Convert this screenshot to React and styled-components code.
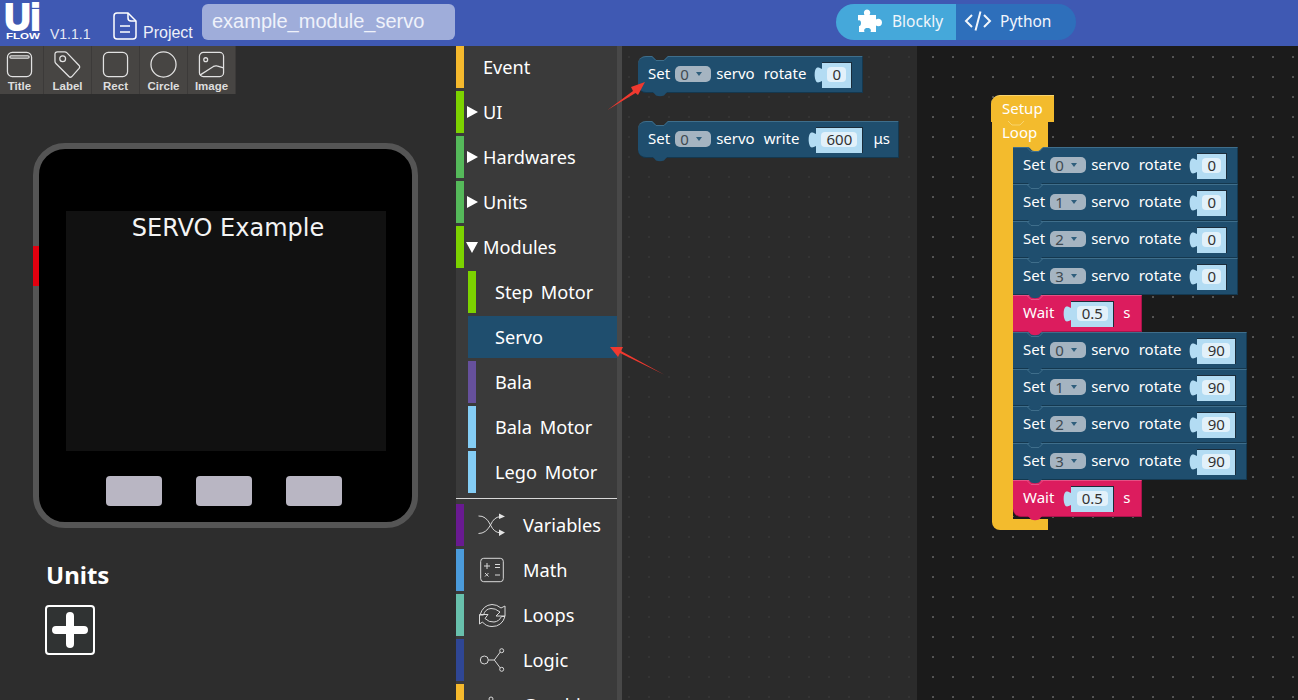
import React from 'react'
import styled, { createGlobalStyle } from 'styled-components'

const GlobalStyle = createGlobalStyle`
  html, body { margin: 0; padding: 0; background: #2d2d2d; }
  * { box-sizing: border-box; }
`

const Page = styled.div`
  position: relative;
  width: 1298px;
  height: 700px;
  overflow: hidden;
  display: flex;
  flex-direction: column;
  font-family: "Noto Sans", sans-serif;
`

/* header */
const Header = styled.header`
  height: 46px;
  flex: none;
  background: #3f59b3;
  display: flex;
  align-items: flex-start;
  color: #fff;
  font-family: "Liberation Sans", sans-serif;
`
const Logo = styled.svg`
  width: 50px;
  height: 46px;
  flex: none;
  font-family: "Liberation Sans", sans-serif;
  font-weight: 700;
`
const Version = styled.span`
  width: 62px;
  margin-top: 27px;
  font-size: 14px;
  line-height: 15px;
  color: #e6e9f5;
`
const ProjectIcon = styled.svg`
  width: 26px;
  height: 30px;
  margin-top: 11px;
  flex: none;
`
const ProjectLabel = styled.span`
  margin: 24px 0 0 5px;
  width: 59px;
  font-size: 16px;
  line-height: 18px;
  color: #eef0f8;
`
const NameField = styled.div`
  width: 253px;
  height: 36px;
  margin-top: 4px;
  padding-left: 10px;
  border-radius: 6px;
  background: #9fadda;
  font-size: 20px;
  line-height: 34px;
  color: #eff2fa;
`
const ModeSwitch = styled.div`
  display: flex;
  margin: 4px 0 0 381px;
  height: 36px;
  width: 240px;
  border-radius: 18px;
  overflow: hidden;
  font-family: "Noto Sans", sans-serif;
  font-size: 15.5px;
`
const ModeTab = styled.div`
  width: 120px;
  display: flex;
  align-items: center;
  gap: ${p => p.$gap}px;
  padding-left: ${p => p.$pad}px;
  padding-bottom: 2px;
  background: ${p => (p.$active ? '#45a8da' : '#2e6fbb')};
  color: #f2f6fb;
`

/* left panel */
const Main = styled.div`
  flex: 1;
  display: flex;
  min-height: 0;
`
const LeftPanel = styled.section`
  width: 456px;
  flex: none;
  background: #2d2d2d;
  overflow: hidden;
`
const Toolbar = styled.div`
  display: flex;
  margin-left: -4px;
`
const ToolItem = styled.div`
  width: 48px;
  height: 48px;
  display: flex;
  flex-direction: column;
  align-items: center;
  padding-top: 5px;
  background: #474543;
  border-right: 1px solid #3c3a39;
  color: #dedede;
  font-family: "Liberation Sans", sans-serif;
  font-weight: 700;
  font-size: 11.5px;
  line-height: 16px;
`
const ToolIcon = styled.svg`
  width: 27px;
  height: 27px;
  flex: none;
`
const Device = styled.div`
  position: relative;
  width: 385px;
  height: 385px;
  margin: 49px 0 0 33px;
  border: 6px solid #555;
  border-radius: 32px;
  background: #000;
  padding: 62px 0 0 27px;
`
const SideTab = styled.div`
  position: absolute;
  left: -6px;
  top: 97px;
  width: 6px;
  height: 40px;
  background: #e3000f;
`
const Screen = styled.div`
  width: 320px;
  height: 240px;
  background: #111;
  color: #f4f4f4;
  font-family: "DejaVu Sans", sans-serif;
  font-size: 24px;
  line-height: 34px;
  text-align: center;
  padding-left: 4px;
`
const DeviceButtons = styled.div`
  display: flex;
  gap: 34px;
  margin: 25px 0 0 40px;
`
const DeviceButton = styled.div`
  width: 56px;
  height: 30px;
  border-radius: 4px;
  background: #b9b6c3;
`
const UnitsTitle = styled.h2`
  margin: 30px 0 0 46px;
  font-size: 24px;
  line-height: 34px;
  font-weight: 700;
  color: #fff;
`
const AddButton = styled.div`
  width: 50px;
  height: 50px;
  margin: 13px 0 0 45px;
  border: 2px solid #fff;
  border-radius: 4px;
  background: #303333;
  display: flex;
  align-items: center;
  justify-content: center;
`
const PlusIcon = styled.svg`
  width: 36px;
  height: 36px;
  filter: blur(0.6px);
`

/* category list */
const Sidebar = styled.nav`
  width: 166px;
  flex: none;
  background: #3a3a3a;
  border-right: 5px solid #484848;
  overflow: hidden;
  color: #fff;
  font-size: 18.2px;
  word-spacing: 3px;
`
const Row = styled.div`
  display: flex;
  align-items: center;
  height: 42px;
  margin: 0 0 3px ${p => (p.$sub ? 12 : 0)}px;
  background: ${p => (p.$selected ? '#1f4e6e' : 'transparent')};
  white-space: nowrap;
`
const ColorBar = styled.div`
  width: 8px;
  height: 100%;
  flex: none;
  background: ${p => p.$color};
`
const Label = styled.span`
  margin-left: ${p => p.$left}px;
  line-height: 42px;
`
const Caret = styled.span`
  width: 0;
  height: 0;
  margin-left: 3px;
  margin-right: -14px;
  border-style: solid;
  border-color: transparent;
  ${p =>
    p.$open
      ? 'border-width: 11px 6px 0 6px; border-top-color: #fff; margin-left: 2px;'
      : 'border-width: 6px 0 6px 11px; border-left-color: #fff;'}
`
const Divider = styled.div`
  height: 1px;
  margin: 5px 0;
  background: #d8d8d8;
`
const CatIcon = styled.svg`
  width: 30px;
  height: 30px;
  margin-left: 13px;
  flex: none;
`

/* block canvases */
const Flyout = styled.section`
  position: relative;
  width: 295px;
  flex: none;
  background-color: #2b2b2b;
  background-image: radial-gradient(circle at 1px 1px, #353535 0.7px, transparent 0.8px);
  background-size: 20px 20px;
  background-position: 6px 10px;
`
const Workspace = styled.section`
  position: relative;
  flex: 1;
  background-color: #1b1b1b;
  background-image: radial-gradient(circle at 1px 1px, #585858 0.7px, transparent 0.8px);
  background-size: 20px 20px;
  background-position: 15px 10px;
`
const FlyoutCorner = styled.div`
  position: absolute;
  right: -8px;
  top: 0;
  width: 8px;
  height: 100%;
  background: #2b2b2b;
  border-radius: 0 8px 8px 0;
`
const Placed = styled.div`
  position: absolute;
  left: ${p => p.$x}px;
  top: ${p => p.$y}px;
`
const BlockBody = styled.div`
  position: relative;
  display: flex;
  align-items: center;
  width: ${p => p.$width}px;
  height: 37px;
  padding: 0 0 3px 10px;
  background: ${p => p.$color};
  border-top: 1px solid ${p => p.$light};
  border-bottom: 1px solid ${p => p.$dark};
  border-right: 1px solid ${p => p.$dark};
  border-radius: ${p => (p.$round ? '8px 0 0 8px' : p.$last ? '0 0 0 8px' : '0')};
  color: #fff;
  font-size: 15px;
  white-space: nowrap;
`
const Word = styled.span`
  margin-left: ${p => p.$left || 0}px;
  line-height: 20px;
`
const Dropdown = styled.span`
  display: flex;
  align-items: center;
  width: 36px;
  height: 16px;
  margin: 2px 0 0 5px;
  padding-left: 5px;
  border-radius: 5px;
  background: #a5b4c1;
  color: #3f4a52;
`
const DropArrow = styled.span`
  width: 0;
  height: 0;
  margin-left: 7px;
  border-style: solid;
  border-width: 4px 3px 0 3px;
  border-color: #2f5e7c transparent transparent;
`
const Slot = styled.span`
  display: flex;
  align-items: center;
  margin: 4px 0 0 ${p => p.$left}px;
`
const Plug = styled.svg`
  width: 8px;
  height: 16px;
  flex: none;
`
const SlotBody = styled.span`
  display: flex;
  align-items: center;
  justify-content: center;
  width: ${p => p.$width}px;
  height: 26px;
  padding-bottom: 3px;
  background: #b3dcf3;
  border-top: 1px solid #1b2c3a;
  border-right: 1px solid #1b2c3a;
`
const Field = styled.span`
  width: ${p => p.$width}px;
  height: 15px;
  border-radius: 4px;
  background: #e2f1fa;
  color: #333;
  line-height: 15px;
  text-align: center;
`
const Notch = styled.svg`
  position: absolute;
  left: ${p => p.$left || 11}px;
  width: 22px;
  height: 6px;
  z-index: 2;
`
const TopNotch = styled(Notch)`
  top: -1px;
`
const BottomBump = styled(Notch)`
  bottom: -5px;
`

const Hat = styled.div`
  position: relative;
  width: 63px;
  height: 27px;
  padding: 2px 0 0 11px;
  background: #f3bb2d;
  border-top: 1px solid #f8d36d;
  border-radius: 9px 0 0 0;
  color: #fff;
  font-size: 15px;
  line-height: 20px;
`
const LoopHead = styled.div`
  position: relative;
  width: 56px;
  height: 25px;
  margin-left: 1px;
  padding-left: 10px;
  background: #f3bb2d;
  color: #fff;
  font-size: 15px;
  line-height: 20px;
`
const LoopMiddle = styled.div`
  display: flex;
  margin-left: 1px;
`
const Spine = styled.div`
  width: 21px;
  background: #f3bb2d;
`
const Stack = styled.div`
  display: flex;
  flex-direction: column;
`
const LoopFoot = styled.div`
  position: relative;
  width: 56px;
  height: 13px;
  margin-left: 1px;
  background: #f3bb2d;
  border-radius: 0 0 0 8px;
  &::before {
    content: "";
    position: absolute;
    left: 21px;
    top: 0;
    width: 35px;
    height: 2px;
    background: #1b1b1b;
  }
`
const Overlay = styled.svg`
  position: absolute;
  left: 0;
  top: 0;
  pointer-events: none;
  z-index: 5;
`

const BLUE = { $color: '#1f4e6e', $light: '#3f6e8b', $dark: '#14384f' }
const PINK = { $color: '#dc1c5e', $light: '#e64f84', $dark: '#a8134a' }

const ValueSlot = ({ value, left, body, field }) => (
  <Slot $left={left}>
    <Plug viewBox="0 0 8 16">
      <path d="M8 2C6 1 4 0 2.500 1 0 3 0 12 2.500 15 4 16 6 15 8 14z" fill="#b3dcf3" />
    </Plug>
    <SlotBody $width={body}>
      <Field $width={field}>{value}</Field>
    </SlotBody>
  </Slot>
)

// free standing blocks have a real dip in the top edge, stacked ones only show a line
const Connectors = ({ fill, line, dip }) => (
  <>
    <TopNotch viewBox="0 0 22 6">
      {dip && <path d="M3 0h16l-4 4H7z" fill={dip} />}
      <path d="M0 .500h3l4 4h8l4-4h3" fill="none" stroke={line} strokeWidth="1" />
    </TopNotch>
    <BottomBump viewBox="0 0 22 6">
      <path d="M3 0h16l-4 4.500q-4 1.500-8 0z" fill={fill} />
    </BottomBump>
  </>
)

const ServoBlock = ({ pin, action, value, width, slotLeft, body, field, unit, round }) => (
  <BlockBody {...BLUE} $width={width} $round={round}>
    <Word>Set</Word>
    <Dropdown>
      {pin}
      <DropArrow />
    </Dropdown>
    <Word $left={5}>servo</Word>
    <Word $left={9}>{action}</Word>
    <ValueSlot value={value} left={slotLeft} body={body} field={field} />
    {unit && <Word $left={10}>{unit}</Word>}
    <Connectors fill="#1f4e6e" line="#3f6e8b" dip={round ? '#2b2b2b' : null} />
  </BlockBody>
)

const WaitBlock = ({ last }) => (
  <BlockBody {...PINK} $width={129} $last={last}>
    <Word>Wait</Word>
    <ValueSlot value="0.5" left={9} body={43} field={31} />
    <Word $left={9}>s</Word>
    <Connectors fill="#dc1c5e" line="#e64f84" />
  </BlockBody>
)

const stroke = { fill: 'none', stroke: '#e2e2e2', strokeWidth: 1.3 }
const catStroke = { fill: 'none', stroke: '#d9d9d9', strokeWidth: 1 }

const tools = [
  {
    name: 'Title',
    icon: (
      <>
        <rect x="1.500" y="1.500" width="25" height="25" rx="5" {...stroke} />
        <rect x="4" y="5" width="20" height="2.500" rx="1.200" {...stroke} />
      </>
    ),
  },
  {
    name: 'Label',
    icon: (
      <>
        <path d="M1 3.500Q1 1 3.500 1H11q1.500 0 2.500 1L26 15q1.200 1.500 0 3l-7.500 8.500q-1.500 1.500-3 0L2 13q-1-1-1-2.500z" {...stroke} />
        <circle cx="9" cy="8" r="3" {...stroke} />
      </>
    ),
  },
  { name: 'Rect', icon: <rect x="1.500" y="1.500" width="25" height="25" rx="5" {...stroke} /> },
  { name: 'Circle', icon: <circle cx="14" cy="14" r="13" {...stroke} /> },
  {
    name: 'Image',
    icon: (
      <>
        <rect x="1.500" y="1.500" width="25" height="25" rx="4" {...stroke} />
        <circle cx="8" cy="9" r="2" {...stroke} />
        <path d="M2 25l14-9q2-1 3.500-.5l7 2" {...stroke} />
      </>
    ),
  },
]

const topLevel = [
  { label: 'Event', color: '#f5b92d' },
  { label: 'UI', color: '#7cd200', caret: true },
  { label: 'Hardwares', color: '#55b95a', caret: true },
  { label: 'Units', color: '#55b95a', caret: true },
  { label: 'Modules', color: '#7cd200', caret: true, open: true },
]

const subLevel = [
  { label: 'Step Motor', color: '#7cd200' },
  { label: 'Servo', color: '#1f4e6e', selected: true },
  { label: 'Bala', color: '#66509c' },
  { label: 'Bala Motor', color: '#84cdf5' },
  { label: 'Lego Motor', color: '#84cdf5' },
]

const catIcons = {
  shuffle: (
    <>
      <path d="M1.500 6Q9 5.500 13.500 15 17 7 23 6.700M1.500 23.500Q9 23.500 13.500 15 17 22.500 23 22.800" {...catStroke} />
      <path d="M22 3.500l6 3-6 2.500zM22 19.500l6 3-6 3.500z" fill="#e4e4e4" />
    </>
  ),
  calc: (
    <>
      <rect x="3.700" y="3.300" width="22.600" height="23.400" rx="3" {...catStroke} />
      <path d="M7 11h6M10 8v6M18 9.500h5M18 12.500h5M8 18l3.500 3.500M11.500 18L8 21.500M18 20h5" {...catStroke} />
    </>
  ),
  loop: (
    <>
      <path d="M3 15Q6 5 15 4.500q5 0 9 3.500l4-2v10h-9l4-4q-5-4-9-3.500Q8 9 6.500 15z" {...catStroke} />
      <path d="M2.500 14.500H11l-3 4q4 4 9 3.500 5-.5 7.500-5.500H28q-3 10-13 10-6 0-9.500-4.500l-3 2z" {...catStroke} />
    </>
  ),
  logic: (
    <>
      <circle cx="7.300" cy="15" r="4" {...catStroke} />
      <circle cx="24.700" cy="5.700" r="2" {...catStroke} />
      <circle cx="24.700" cy="24.300" r="2" {...catStroke} />
      <path d="M11.300 15h6l6-8M17.300 15l6 8" {...catStroke} />
    </>
  ),
  graph: (
    <>
      <circle cx="14" cy="9" r="2" {...catStroke} />
      <path d="M14 11v6l-8 6M14 17l8 6" {...catStroke} />
    </>
  ),
}

const categories = [
  { label: 'Variables', color: '#691a91', icon: 'shuffle' },
  { label: 'Math', color: '#4b9bdb', icon: 'calc' },
  { label: 'Loops', color: '#68c0ac', icon: 'loop' },
  { label: 'Logic', color: '#2f4694', icon: 'logic' },
  { label: 'Graphic', color: '#f5b92d', icon: 'graph' },
]

const App = () => (
  <Page>
    <GlobalStyle />
    <Header>
      <Logo viewBox="0 0 50 46" fill="#fff">
        <text x="4.500" y="30" fontSize="36" stroke="#fff" strokeWidth="2" textLength="36" lengthAdjust="spacingAndGlyphs">
          Ui
        </text>
        <text x="6" y="39" fontSize="8.500" textLength="34" lengthAdjust="spacingAndGlyphs">
          FLOW
        </text>
      </Logo>
      <Version>V1.1.1</Version>
      <ProjectIcon viewBox="0 0 26 30" fill="none" stroke="#fff" strokeWidth="1.500">
        <path d="M5 2h11l8 8v15q0 3-3 3H5q-3 0-3-3V5q0-3 3-3z" />
        <path d="M16 2v5q0 3 3 3h5M8 15h10M8 21h10" />
      </ProjectIcon>
      <ProjectLabel>Project</ProjectLabel>
      <NameField>example_module_servo</NameField>
      <ModeSwitch>
        <ModeTab $active $pad={22} $gap={10}>
          <svg width="24" height="24" viewBox="0 0 24 24">
            <path
              d="M0 6h6.500C5.500 4 5.500 1 9 .500 12.500 1 13 4 11.500 6H18v4.500c2-1.500 6-1 6 3s-4 4.500-6 3V23h-5.500c1-2 0-4-3-4s-4 2-3 4H1v-6c1 .5 2-1 2-3s-1-3.500-3-2.500z"
              fill="#fff"
            />
          </svg>
          Blockly
        </ModeTab>
        <ModeTab $pad={8} $gap={8}>
          <svg width="28" height="22" viewBox="0 0 28 22" fill="none" stroke="#f2f6fb" strokeWidth="2">
            <path d="M8 5l-6 6 6 6M20 5l6 6-6 6M16.500 1.500l-5 19" />
          </svg>
          Python
        </ModeTab>
      </ModeSwitch>
    </Header>
    <Main>
      <LeftPanel>
        <Toolbar>
          {tools.map(t => (
            <ToolItem key={t.name}>
              <ToolIcon viewBox="0 0 28 28">{t.icon}</ToolIcon>
              {t.name}
            </ToolItem>
          ))}
        </Toolbar>
        <Device>
          <SideTab />
          <Screen>SERVO Example</Screen>
          <DeviceButtons>
            <DeviceButton />
            <DeviceButton />
            <DeviceButton />
          </DeviceButtons>
        </Device>
        <UnitsTitle>Units</UnitsTitle>
        <AddButton>
          <PlusIcon viewBox="0 0 36 36">
            <path d="M18 4v28M4 18h28" stroke="#fff" strokeWidth="8" strokeLinecap="round" />
          </PlusIcon>
        </AddButton>
      </LeftPanel>
      <Sidebar>
        {topLevel.map(c => (
          <Row key={c.label}>
            <ColorBar $color={c.color} />
            {c.caret && <Caret $open={c.open} />}
            <Label $left={19}>{c.label}</Label>
          </Row>
        ))}
        {subLevel.map(c => (
          <Row key={c.label} $sub $selected={c.selected}>
            <ColorBar $color={c.color} />
            <Label $left={19}>{c.label}</Label>
          </Row>
        ))}
        <Divider />
        {categories.map(c => (
          <Row key={c.label}>
            <ColorBar $color={c.color} />
            <CatIcon viewBox="0 0 30 30">{catIcons[c.icon]}</CatIcon>
            <Label $left={16}>{c.label}</Label>
          </Row>
        ))}
      </Sidebar>
      <Flyout>
        <FlyoutCorner />
        <Placed $x={16} $y={10}>
          <ServoBlock pin="0" action="rotate" value="0" width={225} slotLeft={8} body={30} field={19} round />
        </Placed>
        <Placed $x={16} $y={75}>
          <ServoBlock pin="0" action="write" value="600" width={261} slotLeft={9} body={47} field={36} unit="μs" round />
        </Placed>
      </Flyout>
      <Workspace>
        <Placed $x={74} $y={49}>
          <Hat>
            Setup
            <BottomBump $left={14} viewBox="0 0 22 6">
              <path d="M3 0l4 4h8l4-4" fill="#f3bb2d" stroke="#f8d36d" />
            </BottomBump>
          </Hat>
          <LoopHead>
            Loop
            <BottomBump $left={33} viewBox="0 0 22 6">
              <path d="M3 0h16l-4 4.500q-4 1.500-8 0z" fill="#f3bb2d" />
            </BottomBump>
          </LoopHead>
          <LoopMiddle>
            <Spine />
            <Stack>
              {['0', '1', '2', '3'].map(p => (
                <ServoBlock key={p} pin={p} action="rotate" value="0" width={225} slotLeft={8} body={30} field={19} />
              ))}
              <WaitBlock />
              {['0', '1', '2', '3'].map(p => (
                <ServoBlock key={p} pin={p} action="rotate" value="90" width={234} slotLeft={8} body={39} field={28} />
              ))}
              <WaitBlock last />
            </Stack>
          </LoopMiddle>
          <LoopFoot />
        </Placed>
      </Workspace>
    </Main>
    <Overlay width="1298" height="700" viewBox="0 0 1298 700">
      <path d="M607.500 110L633 91l-2-4 14-5-7 13-2.500-2z" fill="#f0392f" />
      <path d="M664 374.500L621 351l2-4-13 0 8 10 2-4z" fill="#f0392f" />
    </Overlay>
  </Page>
)

export default App
